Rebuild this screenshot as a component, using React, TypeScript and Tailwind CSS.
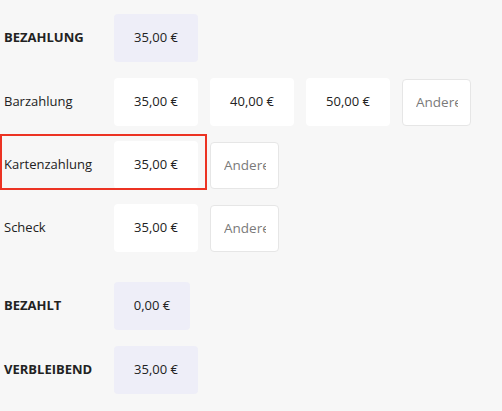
import React from 'react';

const Box = ({ value, tone = 'white', w = 'w-[84px]' }: { value: string; tone?: 'white' | 'lav'; w?: string }) => (
  <div
    className={`${w} h-12 rounded flex items-center justify-center text-[13px] text-[#222] ${
      tone === 'lav' ? 'bg-[#eeeef8]' : 'bg-white'
    }`}
  >
    {value}
  </div>
);

const Other = () => (
  <input
    placeholder="Andere"
    className="w-[69px] h-[47px] rounded border border-[#e6e6e6] bg-white pl-[13px] pr-[12px] text-[13.5px] text-[#222] placeholder:text-[#7a7a7a] outline-none"
  />
);

const Row = ({ label, bold, className = '', children }: { label: string; bold?: boolean; className?: string; children: React.ReactNode }) => (
  <div className={`flex items-center h-12 ${className}`}>
    <div className={`w-[110px] text-[13px] text-[#222] ${bold ? 'font-bold' : ''}`}>{label}</div>
    <div className="flex items-center gap-3">{children}</div>
  </div>
);

export default function App() {
  return (
    <div
      className="relative w-[502px] h-[411px] bg-[#f7f7f7] pl-1 pt-[14px]"
      style={{ fontFamily: '"Open Sans", sans-serif' }}
    >
      <Row label="BEZAHLUNG" bold>
        <Box value="35,00 €" tone="lav" />
      </Row>
      <Row label="Barzahlung" className="mt-4">
        <Box value="35,00 €" />
        <Box value="40,00 €" />
        <Box value="50,00 €" />
        <Other />
      </Row>
      <Row label="Kartenzahlung" className="mt-[15px]">
        <Box value="35,00 €" />
        <Other />
      </Row>
      <Row label="Scheck" className="mt-[15px]">
        <Box value="35,00 €" />
        <Other />
      </Row>
      <Row label="BEZAHLT" bold className="mt-[30px]">
        <Box value="0,00 €" tone="lav" w="w-[76px]" />
      </Row>
      <Row label="VERBLEIBEND" bold className="mt-4">
        <Box value="35,00 €" tone="lav" />
      </Row>
      {/* highlight around selected row */}
      <div className="absolute left-0 top-[134px] w-[207px] h-[56px] border-2 border-[#ec3323] pointer-events-none" />
    </div>
  );
}
